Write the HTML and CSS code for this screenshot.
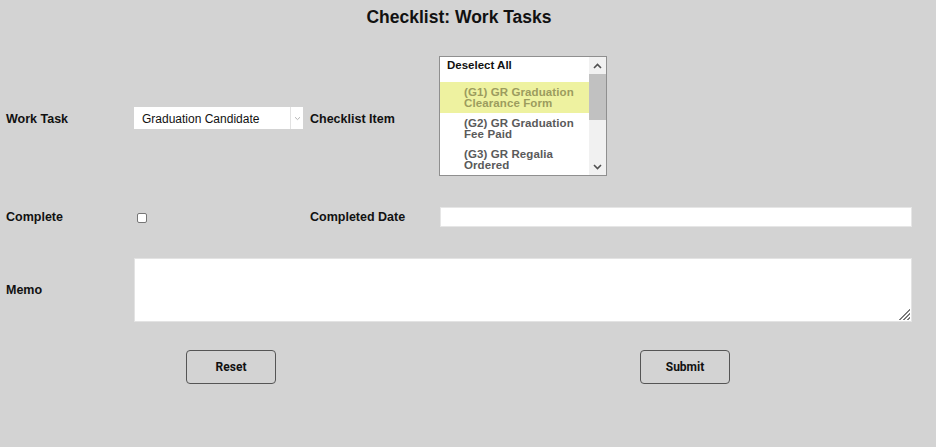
FILE: index.html
```html
<!DOCTYPE html>
<html lang="en">
<head>
<meta charset="utf-8">
<title>Checklist: Work Tasks</title>
<link rel="stylesheet" href="styles.css">
</head>
<body>
<div class="page">
  <h1 class="title">Checklist: Work Tasks</h1>

  <form class="form">
    <label class="label label-top">Work Task</label>
    <div class="select">
      <span class="select-value">Graduation Candidate</span>
      <span class="select-arrow">
        <svg width="7" height="5" viewBox="0 0 7 5"><path d="M1 1.2 L3.5 3.6 L6 1.2" fill="none" stroke="#b5b5b5" stroke-width="1"/></svg>
      </span>
    </div>
    <label class="label label-top">Checklist Item</label>
    <div class="listbox-cell">
      <div class="listbox">
        <div class="options">
          <div class="option option-all">Deselect All</div>
          <div class="option option-item is-selected">(G1) GR Graduation Clearance Form</div>
          <div class="option option-item">(G2) GR Graduation Fee Paid</div>
          <div class="option option-item">(G3) GR Regalia Ordered</div>
        </div>
        <div class="scrollbar">
          <span class="scroll-btn">
            <svg width="9" height="6" viewBox="0 0 9 6"><path d="M1 5 L4.5 1.5 L8 5" fill="none" stroke="#505050" stroke-width="1.6"/></svg>
          </span>
          <span class="scroll-track"><span class="scroll-thumb"></span></span>
          <span class="scroll-btn">
            <svg width="9" height="6" viewBox="0 0 9 6"><path d="M1 1 L4.5 4.5 L8 1" fill="none" stroke="#505050" stroke-width="1.6"/></svg>
          </span>
        </div>
      </div>
    </div>

    <label class="label">Complete</label>
    <div class="check-cell"><input class="check" type="checkbox"></div>
    <label class="label">Completed Date</label>
    <input class="text-input" type="text">

    <label class="label">Memo</label>
    <textarea class="memo"></textarea>
  </form>

  <div class="actions">
    <div class="action-cell"><button class="btn" type="button">Reset</button></div>
    <div class="action-cell"><button class="btn" type="button">Submit</button></div>
  </div>
</div>
</body>
</html>
```

FILE: styles.css
```css
html, body {
  margin: 0;
  padding: 0;
  background: #d3d3d3;
}

body {
  font-family: "Liberation Sans", Arial, sans-serif;
  color: #111;
}

.page {
  width: 906px;
  padding: 0 5px 0 6px;
}

.title {
  margin: 0;
  padding-top: 6px;
  height: 56px;
  box-sizing: border-box;
  text-align: center;
  font-size: 17.5px;
  line-height: 22px;
  font-weight: bold;
  color: #111;
}

.form {
  display: grid;
  grid-template-columns: 128px 176px 129px 473px;
  grid-template-rows: 120px 20px 64px;
  row-gap: 31px;
  align-items: center;
}

.label {
  font-size: 12.5px;
  font-weight: bold;
  color: #111;
}

/* first-row labels line up with the dropdown */
.label-top {
  margin-top: 5px;
}

/* dropdown */
.select {
  width: 169px;
  height: 22px;
  background: #fff;
  display: flex;
  align-items: center;
  box-sizing: border-box;
  margin-top: 4px;
}

.select-value {
  flex: 1;
  padding-left: 8px;
  font-size: 12px;
  color: #111;
  padding-top: 2px;
}

.select-arrow {
  width: 12px;
  height: 22px;
  border-left: 1px solid #e2e2e2;
  display: flex;
  align-items: center;
  justify-content: center;
}

/* multi-select list */
.listbox-cell {
  align-self: stretch;
}

.listbox {
  width: 168px;
  height: 120px;
  box-sizing: border-box;
  border: 1px solid #8f8f8f;
  background: #fff;
  display: flex;
  overflow: hidden;
}

.options {
  flex: 1;
  min-width: 0;
}

.option {
  font-size: 11.5px;
  line-height: 11px;
}

.option-all {
  height: 25px;
  padding: 3px 0 0 7px;
  box-sizing: border-box;
  font-weight: bold;
  color: #111;
}

.option-item {
  height: 31px;
  box-sizing: border-box;
  padding: 5px 4px 0 24px;
  color: #5a5a5a;
  font-weight: bold;
  letter-spacing: 0.1px;
}

.option-item.is-selected {
  background: #eef2a0;
  color: #9c9c5e;
}

.scrollbar {
  width: 17px;
  background: #f1f1f1;
  display: flex;
  flex-direction: column;
}

.scroll-btn {
  height: 17px;
  display: flex;
  align-items: center;
  justify-content: center;
}

.scroll-track {
  flex: 1;
}

.scroll-thumb {
  display: block;
  height: 46px;
  background: #c1c1c1;
}

/* checkbox */
.check-cell {
  display: flex;
  align-items: center;
  padding-left: 3px;
  padding-top: 1px;
}

.check {
  -webkit-appearance: none;
  appearance: none;
  width: 10px;
  height: 10px;
  margin: 0;
  border: 1px solid #767676;
  border-radius: 2px;
  background: #fff;
}

/* text fields */
.text-input {
  grid-column: 4;
  width: 472px;
  height: 20px;
  margin: 0 0 0 1px;
  box-sizing: border-box;
  border: 1px solid #e6e6e6;
  background: #fff;
  padding: 0 4px;
}

/* hatched resize grip drawn in the lower-right corner */
.memo {
  grid-column: 2 / 5;
  width: 778px;
  height: 64px;
  margin: 0;
  box-sizing: border-box;
  border: 1px solid #e3e3e3;
  resize: none;
  background-color: #fff;
  background-image:
    linear-gradient(to bottom right, #fff 50%, transparent 50%),
    repeating-linear-gradient(135deg, #fff 0, #fff 1.6px, #7a7a7a 1.6px, #7a7a7a 2.9px);
  background-size: 13px 13px, 13px 13px;
  background-position: right 1px bottom 1px, right 1px bottom 1px;
  background-repeat: no-repeat;
}

/* buttons */
.actions {
  display: grid;
  grid-template-columns: 450px 458px;
  margin-top: 28px;
}

.action-cell {
  display: flex;
  justify-content: center;
}

.btn {
  width: 90px;
  height: 34px;
  border: 1px solid #555;
  border-radius: 4px;
  background: transparent;
  font-family: Roboto, "Liberation Sans", sans-serif;
  font-size: 12px;
  font-weight: bold;
  color: #111;
}
```
